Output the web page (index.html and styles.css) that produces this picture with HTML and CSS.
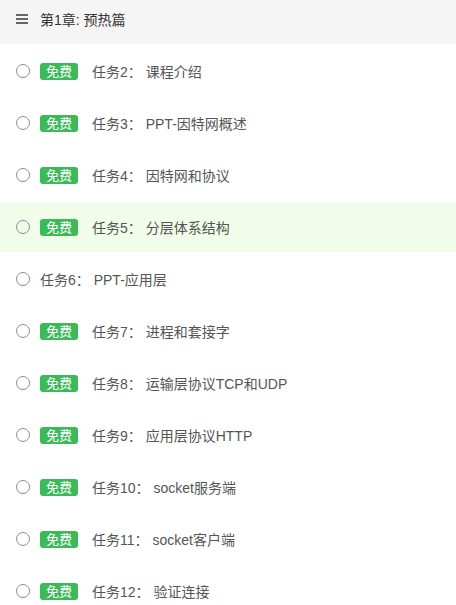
FILE: index.html
```html
<!DOCTYPE html>
<html lang="zh">
<head>
<meta charset="utf-8">
<link rel="stylesheet" href="styles.css">
</head>
<body>
<div class="chapter">
  <svg class="menu" width="12" height="10" viewBox="0 0 12 10"><rect x="0" y="0" width="12" height="2" fill="#666"/><rect x="0" y="4" width="12" height="2" fill="#666"/><rect x="0" y="8" width="12" height="2" fill="#666"/></svg>
  <span class="chapter-title">第1章: 预热篇</span>
</div>
<ul class="tasks">
  <li class="task"><span class="dot"></span><span class="badge">免费</span><span class="name">任务2： 课程介绍</span></li>
  <li class="task"><span class="dot"></span><span class="badge">免费</span><span class="name">任务3： PPT-因特网概述</span></li>
  <li class="task"><span class="dot"></span><span class="badge">免费</span><span class="name">任务4： 因特网和协议</span></li>
  <li class="task active"><span class="dot"></span><span class="badge">免费</span><span class="name">任务5： 分层体系结构</span></li>
  <li class="task"><span class="dot"></span><span class="name">任务6： PPT-应用层</span></li>
  <li class="task"><span class="dot"></span><span class="badge">免费</span><span class="name">任务7： 进程和套接字</span></li>
  <li class="task"><span class="dot"></span><span class="badge">免费</span><span class="name">任务8： 运输层协议TCP和UDP</span></li>
  <li class="task"><span class="dot"></span><span class="badge">免费</span><span class="name">任务9： 应用层协议HTTP</span></li>
  <li class="task"><span class="dot"></span><span class="badge">免费</span><span class="name">任务10： socket服务端</span></li>
  <li class="task"><span class="dot"></span><span class="badge">免费</span><span class="name">任务11： socket客户端</span></li>
  <li class="task"><span class="dot"></span><span class="badge">免费</span><span class="name">任务12： 验证连接</span></li>
</ul>
</body>
</html>
```
FILE: styles.css
```css
html, body {
  margin: 0;
  padding: 0;
  background: #fff;
  font-family: "Liberation Sans", Arial, "Noto Sans CJK SC", sans-serif;
}
.chapter {
  height: 44px;
  background: #f5f5f5;
  display: flex;
  align-items: center;
  padding: 0 16px 6px 16px;
  box-sizing: border-box;
}
.menu {
  display: block;
  margin-right: 12px;
}
.chapter-title {
  font-size: 14px;
  color: #333;
}
.tasks {
  list-style: none;
  margin: 0;
  padding: 2px 0 0 0;
}
.task {
  height: 50px;
  margin-bottom: 2px;
  display: flex;
  align-items: center;
  padding: 0 16px;
  box-sizing: border-box;
}
.task.active {
  background: #f1fce9;
}
.dot {
  width: 14px;
  height: 14px;
  border: 1.5px solid #8c8c8c;
  border-radius: 50%;
  box-sizing: border-box;
  margin-right: 10px;
  flex: none;
}
.badge {
  background: #3cba5a;
  color: #fff;
  font-size: 13px;
  line-height: 17px;
  height: 17px;
  padding: 0 6px;
  border-radius: 3px;
  margin-right: 14px;
}
.name {
  font-size: 14px;
  color: #555;
}
```
